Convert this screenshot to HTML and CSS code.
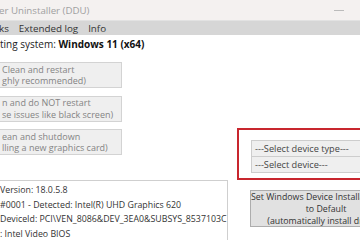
FILE: index.html
```html
<!DOCTYPE html>
<html lang="en">
<head>
    <meta charset="UTF-8">
    <meta name="viewport" content="width=device-width, initial-scale=1.0">
    <title>Display Driver Uninstaller (DDU)</title>
    <link rel="stylesheet" href="styles.css">
</head>
<body>

    <div class="window">
        <div class="titlebar">
            <span class="title">er Uninstaller (DDU)</span>
            <span class="minimize"></span>
        </div>
        <div class="menubar">
            <span class="menu-item first">ks</span>
            <span class="menu-item">Extended log</span>
            <span class="menu-item">Info</span>
        </div>

        <div class="main">
            <div class="left">
                <p class="os-line">ting system: <strong>Windows 11 (x64)</strong></p>
                <button class="action-btn">Clean and restart<br>ghly recommended)</button>
                <button class="action-btn">n and do NOT restart<br>se issues like black screen)</button>
                <button class="action-btn">ean and shutdown<br>lling a new graphics card)</button>
                <div class="log-box">
                    <p>Version: 18.0.5.8</p>
                    <p>#0001 - Detected: Intel(R) UHD Graphics 620</p>
                    <p>DeviceId: PCI\VEN_8086&amp;DEV_3EA0&amp;SUBSYS_8537103C</p>
                    <p>: Intel Video BIOS</p>
                </div>
            </div>

            <div class="right">
                <div class="device-select">
                    <div class="select-box">---Select device type---</div>
                    <div class="select-box">---Select device---</div>
                </div>
                <button class="default-btn">Set Windows Device Installation Settings<br>to Default<br>(automatically install drivers)</button>
            </div>
        </div>
    </div>

</body>
</html>
```

FILE: styles.css
```css
body {
    margin: 0;
    padding: 0;
    background-color: white;
    font-family: "Segoe UI", "Open Sans", sans-serif;
    font-size: 10px;
    color: #222;
}
.window {
    width: 360px;
    height: 240px;
    overflow: hidden;
}
.titlebar {
    height: 20px;
    background-color: #f4f1f0;
    display: flex;
    align-items: center;
    justify-content: space-between;
}
.title {
    color: #a0a0a0;
    font-size: 9.7px;
    margin-left: -1px;
}
.minimize {
    width: 10px;
    height: 1px;
    background-color: #bbb;
    margin-right: 16px;
}
.menubar {
    height: 15px;
    background-color: #d6d6d6;
    border-top: 1px solid #e2e2e2;
    box-sizing: border-box;
    display: flex;
    align-items: center;
    font-size: 9.8px;
    color: #333;
}
.menu-item {
    margin-right: 10px;
}
.menu-item.first {
    margin-left: -1px;
}
.main {
    display: flex;
}
.left {
    width: 228px;
    flex-shrink: 0;
    display: flex;
    flex-direction: column;
}
.os-line {
    margin: 0;
    height: 19px;
    line-height: 19px;
    color: #222;
}
.os-line strong {
    color: #111;
}
.action-btn {
    width: 127px;
    height: 26px;
    margin: 8px 0 0 -5px;
    padding: 0 0 0 6px;
    text-align: left;
    white-space: nowrap;
    font-family: inherit;
    font-size: 9px;
    line-height: 11.5px;
    color: #848484;
    background-color: #efefef;
    border: 1px solid #d3d3d3;
    border-radius: 0;
}
.action-btn + .action-btn {
    margin-top: 7.5px;
}
.log-box {
    margin: 25px 0 0 -5px;
    padding: 2px 0 0 5px;
    height: 60px;
    border-top: 1px solid #cfcfcf;
    border-right: 1px solid #cfcfcf;
    color: #333;
    font-size: 8.8px;
}
.log-box p {
    margin: 0;
    line-height: 14.5px;
    white-space: nowrap;
}
.right {
    margin-left: 9px;
    padding-top: 93px;
}
.device-select {
    width: 200px;
    border: 2px solid #c8262e;
    padding: 10px 0 5px 12px;
}
.select-box {
    height: 15px;
    line-height: 15px;
    padding-left: 3px;
    background-color: #efefef;
    border: 1px solid #cdcdcd;
    color: #444;
    font-size: 9.2px;
}
.select-box + .select-box {
    border-top: none;
}
.default-btn {
    width: 152px;
    height: 37px;
    margin: 10px 0 0 13px;
    padding: 0;
    font-family: inherit;
    font-size: 8.8px;
    line-height: 12px;
    white-space: nowrap;
    color: #333;
    background-color: #e1e1e1;
    border: 1px solid #adadad;
    border-radius: 0;
}
```
